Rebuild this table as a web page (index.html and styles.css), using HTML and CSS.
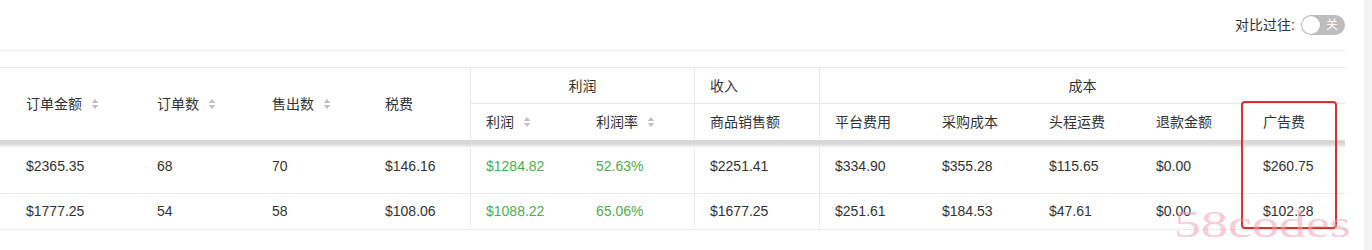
FILE: index.html
```html
<!DOCTYPE html>
<html lang="zh-CN">
<head>
<meta charset="utf-8">
<title>利润报表</title>
<link rel="stylesheet" href="styles.css">
</head>
<body>
<div class="page">
  <main class="main">
    <div class="toolbar">
      <span class="toolbar-label">对比过往:</span>
      <span class="switch"><span class="knob"></span><span class="switch-text">关</span></span>
    </div>

    <div class="table">
      <div class="th span2 c1">订单金额<svg class="sort" viewBox="0 0 8 12" width="8" height="12"><path d="M4 1L7.5 5H0.5Z M4 11L7.5 7H0.5Z"/></svg></div>
      <div class="th span2">订单数<svg class="sort" viewBox="0 0 8 12" width="8" height="12"><path d="M4 1L7.5 5H0.5Z M4 11L7.5 7H0.5Z"/></svg></div>
      <div class="th span2">售出数<svg class="sort" viewBox="0 0 8 12" width="8" height="12"><path d="M4 1L7.5 5H0.5Z M4 11L7.5 7H0.5Z"/></svg></div>
      <div class="th span2">税费</div>
      <div class="th group bl center g-profit">利润</div>
      <div class="th group bl g-income">收入</div>
      <div class="th group bl center g-cost">成本</div>

      <div class="th sub bl">利润<svg class="sort" viewBox="0 0 8 12" width="8" height="12"><path d="M4 1L7.5 5H0.5Z M4 11L7.5 7H0.5Z"/></svg></div>
      <div class="th sub">利润率<svg class="sort" viewBox="0 0 8 12" width="8" height="12"><path d="M4 1L7.5 5H0.5Z M4 11L7.5 7H0.5Z"/></svg></div>
      <div class="th sub bl">商品销售额</div>
      <div class="th sub bl">平台费用</div>
      <div class="th sub">采购成本</div>
      <div class="th sub">头程运费</div>
      <div class="th sub">退款金额</div>
      <div class="th sub">广告费</div>

      <div class="shadow-bar"></div>

      <div class="td r1 c1">$2365.35</div>
      <div class="td r1">68</div>
      <div class="td r1">70</div>
      <div class="td r1">$146.16</div>
      <div class="td r1 bl green">$1284.82</div>
      <div class="td r1 green">52.63%</div>
      <div class="td r1 bl">$2251.41</div>
      <div class="td r1 bl">$334.90</div>
      <div class="td r1">$355.28</div>
      <div class="td r1">$115.65</div>
      <div class="td r1">$0.00</div>
      <div class="td r1">$260.75</div>

      <div class="td r2 c1">$1777.25</div>
      <div class="td r2">54</div>
      <div class="td r2">58</div>
      <div class="td r2">$108.06</div>
      <div class="td r2 bl green">$1088.22</div>
      <div class="td r2 green">65.06%</div>
      <div class="td r2 bl">$1677.25</div>
      <div class="td r2 bl">$251.61</div>
      <div class="td r2">$184.53</div>
      <div class="td r2">$47.61</div>
      <div class="td r2">$0.00</div>
      <div class="td r2">$102.28</div>
    </div>

    <div class="highlight-box"></div>
    <div class="watermark">58codes</div>
  </main>
  <div class="gutter"></div>
</div>
</body>
</html>
```

FILE: styles.css
```css
* { box-sizing: border-box; }

html, body {
  margin: 0;
  padding: 0;
  background: #fff;
}

body {
  font-family: "Liberation Sans", "Noto Sans CJK SC", sans-serif;
  font-size: 14px;
  color: #333;
  width: 1372px;
  height: 250px;
  overflow: hidden;
}

.page {
  display: flex;
  height: 250px;
}

.main {
  position: relative;
  width: 1364px;
  height: 250px;
}

.gutter {
  width: 8px;
  height: 250px;
  background: #f4f4f4;
}

/* toolbar */
.toolbar {
  width: 1345px;
  height: 51px;
  border-bottom: 1px solid #e9e9e9;
  display: flex;
  align-items: center;
  justify-content: flex-end;
  padding-bottom: 1px;
  margin-bottom: 16px;
}

.toolbar-label {
  line-height: 20px;
  margin-right: 6px;
  color: #333;
}

.switch {
  width: 44px;
  height: 20px;
  border-radius: 10px;
  background: #bdbdbd;
  display: flex;
  align-items: center;
}

.knob {
  width: 18px;
  height: 18px;
  margin-left: 1px;
  border-radius: 50%;
  background: #fff;
  box-shadow: 0 0 0 0.5px rgba(0,0,0,0.08);
}

.switch-text {
  margin-left: auto;
  margin-right: 7px;
  font-size: 12px;
  line-height: 12px;
  color: #fff;
}

/* table */
.table {
  width: 1345px;
  display: grid;
  grid-template-columns: 141px 115px 113px 101px 110px 114px 125px 107px 107px 107px 107px 98px;
  grid-template-rows: 36px 36px 7px 47px 36px;
  border-top: 1px solid #e9e9e9;
}

.th {
  display: flex;
  align-items: center;
  padding-left: 16px;
  line-height: 20px;
  color: #333;
  background: #fff;
}

.th.span2 { grid-row: 1 / 3; }

.th.group {
  grid-row: 1;
  border-bottom: 1px solid #e9e9e9;
}

.g-profit { grid-column: 5 / 7; }
.g-income { grid-column: 7 / 8; }
.g-cost { grid-column: 8 / 13; }

.th.center {
  justify-content: center;
  padding-left: 0;
}

.th.sub { grid-row: 2; }

.c1 { padding-left: 26px; }

.bl {
  border-left: 1px solid #e9e9e9;
  padding-left: 15px;
}

.th.center.bl { padding-left: 0; }

.sort {
  margin-left: 9px;
  fill: #c2c2c2;
  flex: none;
}

.shadow-bar {
  grid-column: 1 / -1;
  grid-row: 3;
  background: linear-gradient(#dadada 0%, #d4d4d4 40%, #e4e4e4 75%, #f2f2f2 100%);
}

.td {
  line-height: 20px;
  padding-left: 16px;
  border-bottom: 1px solid #e9e9e9;
  color: #333;
}

.td.bl { padding-left: 15px; }
.td.c1 { padding-left: 26px; }

.td.r1 { padding-top: 9px; }
.td.r2 { padding-top: 7px; }

.green { color: #4cae4c; }

/* annotation overlays */
.highlight-box {
  position: absolute;
  left: 1241px;
  top: 101px;
  width: 96px;
  height: 128px;
  border: 2px solid #d8322f;
  border-radius: 4px;
}

.watermark {
  position: absolute;
  left: 1174px;
  top: 205px;
  font-family: "Liberation Serif", "DejaVu Serif", serif;
  font-size: 38px;
  line-height: 38px;
  color: #f2a3b3;
  opacity: 0.55;
  transform: scaleX(1.42);
  transform-origin: left top;
  white-space: nowrap;
  pointer-events: none;
}
```
